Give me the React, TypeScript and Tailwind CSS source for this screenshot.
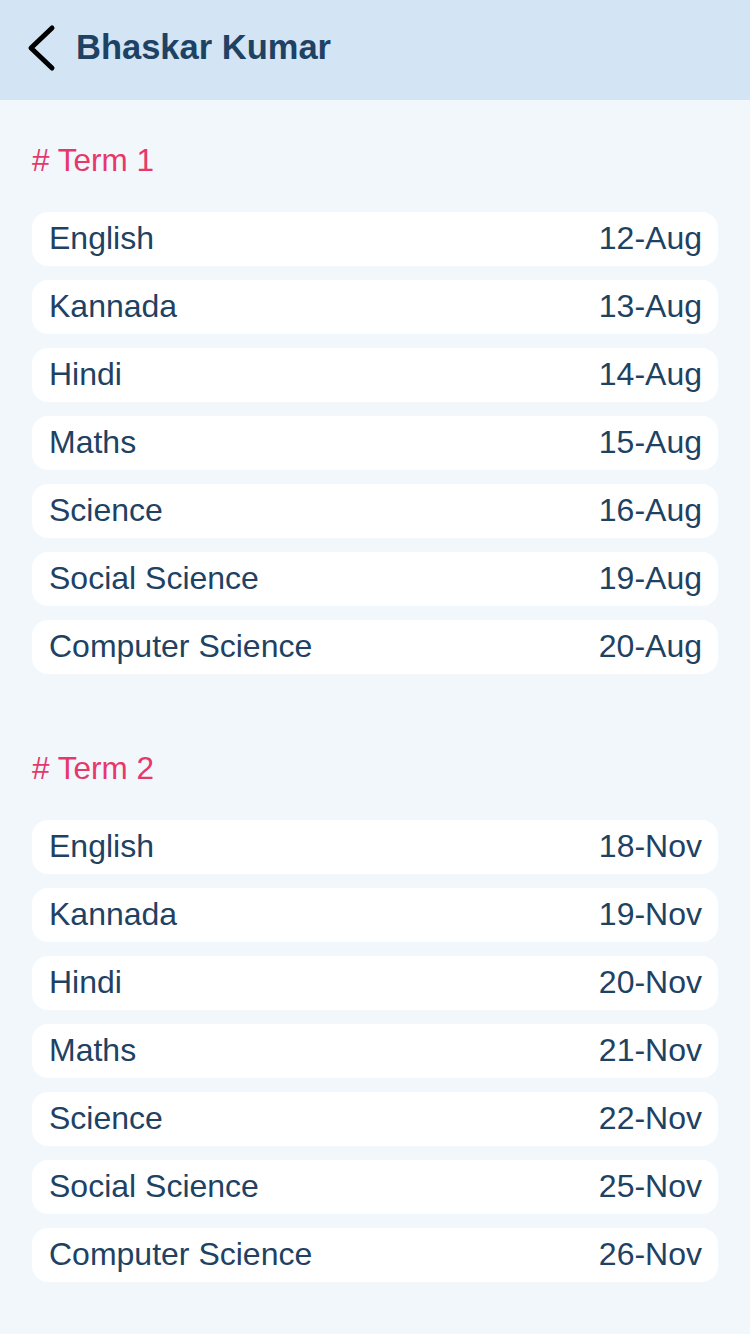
const TERMS = [
  {
    title: '# Term 1',
    exams: [
      ['English', '12-Aug'],
      ['Kannada', '13-Aug'],
      ['Hindi', '14-Aug'],
      ['Maths', '15-Aug'],
      ['Science', '16-Aug'],
      ['Social Science', '19-Aug'],
      ['Computer Science', '20-Aug'],
    ],
  },
  {
    title: '# Term 2',
    exams: [
      ['English', '18-Nov'],
      ['Kannada', '19-Nov'],
      ['Hindi', '20-Nov'],
      ['Maths', '21-Nov'],
      ['Science', '22-Nov'],
      ['Social Science', '25-Nov'],
      ['Computer Science', '26-Nov'],
    ],
  },
];

export default function App() {
  return (
    <div className="min-h-[1334px] w-[750px] bg-[#f2f7fc] font-['Liberation_Sans',Arial,sans-serif] text-[#1e4263]">
      <header className="flex h-[100px] items-center bg-[#d3e5f4] pb-[4px] pl-[26px]">
        <svg width="32" height="48" viewBox="0 0 32 48" className="mr-[18px]">
          <path
            d="M26 4 L5 24 L26 44"
            fill="none"
            stroke="#000"
            strokeWidth="5"
            strokeLinecap="round"
            strokeLinejoin="round"
          />
        </svg>
        <h1 className="text-[34.5px] font-bold">Bhaskar Kumar</h1>
      </header>

      <main className="px-[32px] pt-[40px]">
        {TERMS.map((term) => (
          <section key={term.title} className="mb-[74px]">
            <h2 className="mb-[32px] text-[31.5px] leading-[40px] text-[#e6386a]">
              {term.title}
            </h2>
            <ul className="space-y-[14px]">
              {term.exams.map(([subject, date]) => (
                <li
                  key={subject}
                  className="flex h-[54px] items-center justify-between rounded-[16px] bg-white pb-[2px] pl-[17px] pr-[16px] text-[32px]"
                >
                  <span>{subject}</span>
                  <span>{date}</span>
                </li>
              ))}
            </ul>
          </section>
        ))}
      </main>
    </div>
  );
}
